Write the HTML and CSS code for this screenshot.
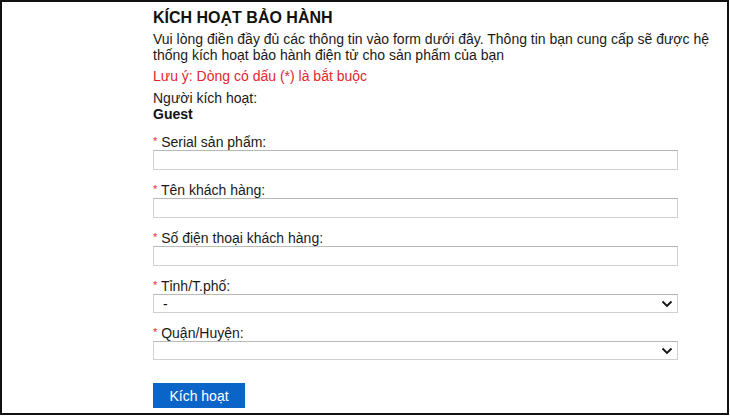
FILE: index.html
```html
<!DOCTYPE html>
<html lang="vi">
  <head>
    <meta charset="UTF-8">
    <meta name="viewport" content="width=device-width">
    <title>Kích hoạt bảo hành</title>
    <link rel="stylesheet" href="styles.css">
  </head>
  <body>
    <div class="frame">
      <form class="box">
        <h2 class="ttl">KÍCH HOẠT BẢO HÀNH</h2>
        <p class="intro">Vui lòng điền đầy đủ các thông tin vào form dưới đây. Thông tin bạn cung cấp sẽ được hệ thống kích hoạt bảo hành điện tử cho sản phẩm của bạn</p>
        <p class="note">Lưu ý: Dòng có dấu (*) là bắt buộc</p>
        <div class="who">Người kích hoạt:<b>Guest</b></div>
        <label class="f"><span><i>*</i> Serial sản phẩm:</span><input class="i"></label>
        <label class="f"><span><i>*</i> Tên khách hàng:</span><input class="i"></label>
        <label class="f"><span><i>*</i> Số điện thoại khách hàng:</span><input class="i"></label>
        <label class="f"><span><i>*</i> Tỉnh/T.phố:</span>
          <span class="sw"><select class="i s"><option>-</option></select>
            <svg viewBox="0 0 12 8" width="12" height="8"><path d="M1.5 1.5 6 6l4.5-4.5" fill="none" stroke="#111" stroke-width="1.8"/></svg></span></label>
        <label class="f"><span><i>*</i> Quận/Huyện:</span>
          <span class="sw"><select class="i s"><option></option></select>
            <svg viewBox="0 0 12 8" width="12" height="8"><path d="M1.5 1.5 6 6l4.5-4.5" fill="none" stroke="#111" stroke-width="1.8"/></svg></span></label>
        <button type="button" class="b">Kích hoạt</button>
      </form>
    </div>
  </body>
</html>
```

FILE: styles.css
```css
body {margin: 0; background: #fff; color: #1a1a1a;
  font-family: 'Liberation Sans', Arial, sans-serif; font-size: 14px; line-height: 16px;}
.frame {width: 729px; height: 415px; box-sizing: border-box;
  border: 2px solid #111; overflow: hidden;}
.box {width: 565px; padding: 7px 0 0 151px; display: flex; flex-flow: column;}
.ttl {font-size: 16px; line-height: 18px; font-weight: 700; margin: 0; color: #111;}
.intro {margin: 4px 0 0;}
.note {margin: 5px 0 0; color: #e3262f;}
.who {margin-top: 6px; display: flex; flex-flow: column;}
.who b {color: #111;}
.f {margin-top: 11px; width: 525px; display: flex; flex-flow: column;}
.who + .f {margin-top: 11px;}
.f i {color: #e3262f; font-style: normal; font-size: 11px; vertical-align: 2px;}
.i {font: inherit; height: 20px; margin: 0; padding: 0 9px; box-sizing: border-box;
  border: 1px solid #d0d0d0; border-top-color: #b8b8b8; border-radius: 0;
  background: #fff; outline: 0;}
.sw {position: relative; display: flex;}
.s {appearance: none; width: 100%; height: 19px; padding: 0 9px; color: #111;}
.sw svg {position: absolute; right: 5px; top: 6px; pointer-events: none;}
.b {margin-top: 23px; width: 92px; height: 25px; padding: 0;
  font: inherit; font-size: 14px; color: #fff; background: #0b64c8;
  border: 0; border-radius: 0; cursor: pointer;}
```
